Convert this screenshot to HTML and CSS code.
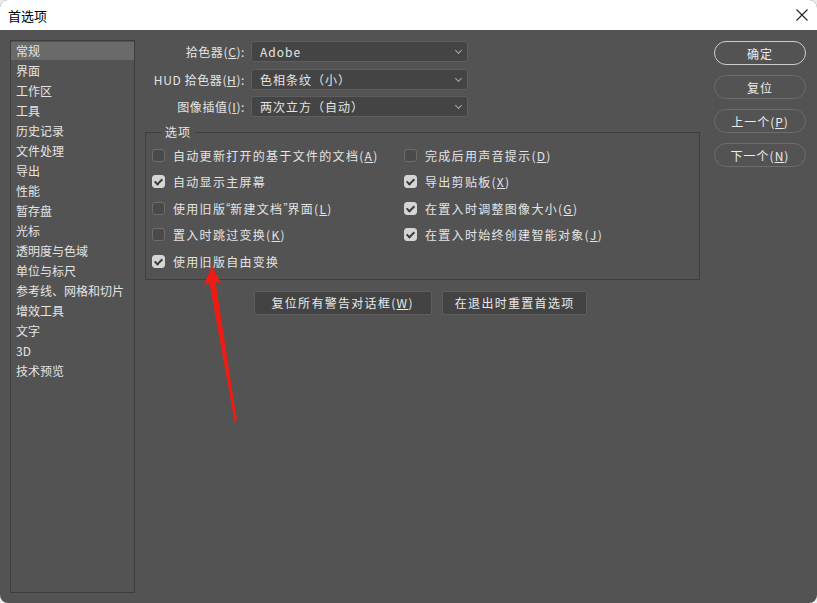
FILE: index.html
```html
<!DOCTYPE html>
<html>
<head>
    <title>首选项</title>
    <meta charset="utf-8" />
    <link rel="stylesheet" href="styles.css">
</head>
<body>
    <div class="window">
        <div class="titlebar">
            <span class="title">首选项</span>
            <svg class="close" width="12" height="12" viewBox="0 0 12 12">
                <path d="M0.5 0.5 L11.5 11.5 M11.5 0.5 L0.5 11.5" stroke="#222" stroke-width="1.1" fill="none" />
            </svg>
        </div>

        <div class="dialog">
            <ul class="nav">
                <li class="active">常规</li>
                <li>界面</li>
                <li>工作区</li>
                <li>工具</li>
                <li>历史记录</li>
                <li>文件处理</li>
                <li>导出</li>
                <li>性能</li>
                <li>暂存盘</li>
                <li>光标</li>
                <li>透明度与色域</li>
                <li>单位与标尺</li>
                <li>参考线、网格和切片</li>
                <li>增效工具</li>
                <li>文字</li>
                <li>3D</li>
                <li>技术预览</li>
            </ul>

            <div class="main">
                <div class="pickers">
                    <label>拾色器(<u>C</u>):</label>
                    <div class="select">Adobe<span class="chev"></span></div>

                    <label>HUD 拾色器(<u>H</u>):</label>
                    <div class="select">色相条纹（小）<span class="chev"></span></div>

                    <label>图像插值(<u>I</u>):</label>
                    <div class="select">两次立方（自动）<span class="chev"></span></div>
                </div>

                <fieldset class="options">
                    <legend>选项</legend>
                    <div class="opt-grid">
                        <div class="opt"><span class="box"></span>自动更新打开的基于文件的文档(<u>A</u>)</div>
                        <div class="opt"><span class="box"></span>完成后用声音提示(<u>D</u>)</div>

                        <div class="opt"><span class="box checked"></span>自动显示主屏幕</div>
                        <div class="opt"><span class="box checked"></span>导出剪贴板(<u>X</u>)</div>

                        <div class="opt"><span class="box"></span>使用旧版<span class="q">“</span>新建文档<span class="q">”</span>界面(<u>L</u>)</div>
                        <div class="opt"><span class="box checked"></span>在置入时调整图像大小(<u>G</u>)</div>

                        <div class="opt"><span class="box"></span>置入时跳过变换(<u>K</u>)</div>
                        <div class="opt"><span class="box checked"></span>在置入时始终创建智能对象(<u>J</u>)</div>

                        <div class="opt"><span class="box checked"></span>使用旧版自由变换</div>
                    </div>
                </fieldset>

                <div class="actions">
                    <button class="btn wide">复位所有警告对话框(<u>W</u>)</button>
                    <button class="btn">在退出时重置首选项</button>
                </div>
            </div>

            <div class="side-buttons">
                <button class="pill default">确定</button>
                <button class="pill">复位</button>
                <button class="pill">上一个(<u>P</u>)</button>
                <button class="pill">下一个(<u>N</u>)</button>
            </div>
        </div>

        <!-- red annotation arrow -->
        <svg class="arrow" width="817" height="603" viewBox="0 0 817 603">
            <polygon points="212,266 221,283 215.5,282 237,421 234.5,421 209.5,283.5 204,284.5" fill="#ee1c13" />
        </svg>
    </div>
</body>
</html>
```

FILE: styles.css
```css
html, body {
    margin: 0;
    padding: 0;
    background-color: #ececec;
}

body {
    font-family: "Noto Sans CJK SC", "Noto Sans", sans-serif;
    font-size: 12px;
}

.window {
    position: relative;
    width: 817px;
    height: 603px;
    display: flex;
    flex-direction: column;
    background-color: #535353;
    border-radius: 8px;
    overflow: hidden;
}

.titlebar {
    height: 30px;
    flex-shrink: 0;
    background-color: #fff;
    display: flex;
    align-items: center;
    justify-content: space-between;
    padding: 0 9px 0 8px;
}

.title {
    font-size: 13px;
    color: #000;
}

.dialog {
    flex: 1;
    display: flex;
    padding: 10px 11px 10px 10px;
    min-height: 0;
}

/* left list */
.nav {
    list-style: none;
    margin: 0;
    padding: 1px 0 0 0;
    width: 123px;
    border: 1px solid #3d3d3d;
    color: #e4e4e4;
}

.nav li {
    height: 18px;
    line-height: 18px;
    margin-bottom: 2px;
    padding-left: 5px;
}

.nav li.active {
    background-color: #6a6a6a;
}

/* middle */
.main {
    flex: 1;
    margin-left: 10px;
}

.pickers {
    display: grid;
    grid-template-columns: 100px 217px;
    column-gap: 6px;
    row-gap: 6.5px;
    margin-top: 1px;
    color: #e4e4e4;
}

.pickers label {
    text-align: right;
    line-height: 21px;
    letter-spacing: 0.6px;
    white-space: nowrap;
}

.select {
    position: relative;
    height: 19px;
    line-height: 19px;
    padding-left: 8px;
    background-color: #444;
    border: 1px solid #5e5e5e;
    border-radius: 3px;
    letter-spacing: 1px;
}

.chev {
    position: absolute;
    right: 6px;
    top: 6px;
    width: 4px;
    height: 4px;
    border-right: 1px solid #a8a8a8;
    border-bottom: 1px solid #a8a8a8;
    transform: rotate(45deg);
}

.options {
    margin: 6px 0 0 0;
    padding: 1px 0 4px 6px;
    border: 1px solid #3f3f3f;
    color: #e4e4e4;
}

.options legend {
    margin-left: 9px;
    padding: 0 4px;
    line-height: 18px;
    letter-spacing: 1px;
}

.opt-grid {
    display: grid;
    grid-template-columns: 252px 1fr;
    grid-auto-rows: 26.5px;
}

.opt {
    display: flex;
    align-items: center;
    letter-spacing: 1.3px;
    white-space: nowrap;
}

.opt .q {
    font-family: "Liberation Sans", sans-serif;
    letter-spacing: 0;
}

.box {
    width: 11px;
    height: 11px;
    margin-right: 8px;
    border: 1px solid #6c6c6c;
    border-radius: 3px;
    background-color: #4a4a4a;
    position: relative;
    flex-shrink: 0;
}

.box.checked {
    background-color: #d5d5d5;
    border-color: #d5d5d5;
}

.box.checked::after {
    content: "";
    position: absolute;
    left: 3px;
    top: 1px;
    width: 3px;
    height: 6px;
    border-right: 2px solid #3a3a3a;
    border-bottom: 2px solid #3a3a3a;
    transform: rotate(45deg);
}

.actions {
    display: flex;
    justify-content: center;
    gap: 10px;
    margin-top: 11px;
    padding-right: 4px;
}

.btn {
    height: 24px;
    padding: 0 12px;
    font-family: inherit;
    font-size: 12px;
    letter-spacing: 1.3px;
    color: #eaeaea;
    background-color: #434343;
    border: 1px solid #5e5e5e;
    border-radius: 2px;
}

.btn.wide {
    padding: 0 17px;
}

/* right buttons */
.side-buttons {
    width: 92px;
    margin-left: 14px;
    margin-top: 1px;
    display: flex;
    flex-direction: column;
    gap: 10px;
}

.pill {
    height: 24px;
    font-family: inherit;
    font-size: 12px;
    letter-spacing: 1px;
    color: #ececec;
    background-color: transparent;
    border: 1px solid #6d6d6d;
    border-radius: 12px;
}

.pill.default {
    border: 1.5px solid #cdcdcd;
}

u {
    text-decoration: underline;
    text-underline-offset: 1px;
}

.arrow {
    position: absolute;
    left: 0;
    top: 0;
    pointer-events: none;
}
```
